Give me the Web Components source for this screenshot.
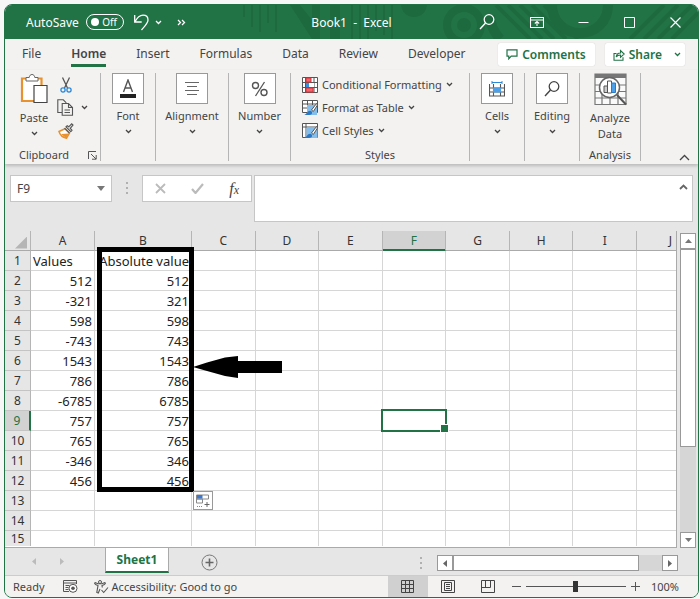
<!DOCTYPE html>
<html lang="en">
<head>
<meta charset="utf-8">
<title>Book1 - Excel</title>
<style>
html,body{margin:0;height:100%}
body{box-sizing:border-box;padding:4px 1px 1px 4px;background:#f7f7f7;color:#444;font-family:"Noto Sans","Open Sans",sans-serif;font-size:12px;--green:#217346;--face:#f3f2f1;--gray:#e6e6e6}
</style>
</head>
<body>
<app-window>
  <title-bar></title-bar>
  <ribbon-tabs></ribbon-tabs>
  <ribbon-body></ribbon-body>
  <formula-bar></formula-bar>
  <sheet-area></sheet-area>
  <sheet-tabs></sheet-tabs>
  <status-bar></status-bar>
</app-window>
<script>
const ICONS = {
  undo: [16,18,'<path d="M1.700 2v7h7M2 8.800C4 5 7 2.200 10 2.200c3 0 5 2 5 4.800 0 3-3 6-6.500 10" fill="none" stroke="currentColor" stroke-width="1.300"/>'],
  chev: [7,5,'<path d="M1 1l2.500 2.500L6 1" fill="none" stroke="currentColor" stroke-width="1.300"/>'],
  up: [11,7,'<path d="M1 6l4.500-4.500L10 6" fill="none" stroke="currentColor" stroke-width="1.300"/>'],
  more: [9,7,'<path d="M1 1l2.500 2.500L1 6M5 1l2.500 2.500L5 6" fill="none" stroke="currentColor" stroke-width="1.300"/>'],
  search: [16,16,'<circle cx="10" cy="5.500" r="4.800" fill="none" stroke="currentColor" stroke-width="1.300"/><path d="M6.500 9L1 15" stroke="currentColor" stroke-width="1.400"/>'],
  ribbonmode: [14,11,'<path d="M.5.5h13v10H.5zM.5 3h13M7 9V4.500M4.800 6.500L7 4.500l2.200 2" fill="none" stroke="currentColor" stroke-width="1.100"/>'],
  min: [11,11,'<path d="M.5 5.500h10" stroke="currentColor"/>'],
  max: [11,11,'<path d="M.5.5h10v10H.5z" fill="none" stroke="currentColor"/>'],
  close: [11,11,'<path d="M.5.5l10 10M10.500.5l-10 10" stroke="currentColor" stroke-width="1.200"/>'],
  comment: [12,11,'<path d="M1 .8h10v6.400H5.200L2.800 9.800V7.200H1z" fill="none" stroke="currentColor" stroke-width="1.200"/>'],
  share: [12,12,'<path d="M3.500 4.500H1v6.700h9V8.300M3.200 8C3.500 5.300 5 4 7.500 4V1.500L11.200 5 7.500 8.300V6C5.500 6 4.200 6.500 3.200 8z" fill="none" stroke="currentColor" stroke-width="1.100"/>'],
  paste: [28,31,'<path d="M2 5.500h19.500V28H2z" fill="#fff" stroke="#e8912d" stroke-width="2.200"/><path d="M6 8V4.500h3.200C9.500 2.500 10.500 1.500 12 1.500s2.500 1 2.800 3H18V8z" fill="#fff" stroke="#666"/><path d="M14 12.500h13v17H14z" fill="#fff" stroke="#444" stroke-width="1.200"/>'],
  cut: [12,16,'<path d="M2.500.5l5 10.500M9.500.5l-5 10.500" stroke="#555" stroke-width="1.300"/><circle cx="3" cy="13" r="2.100" fill="none" stroke="#2b88d8" stroke-width="1.300"/><circle cx="9" cy="13" r="2.100" fill="none" stroke="#2b88d8" stroke-width="1.300"/>'],
  copy: [17,17,'<path d="M5 13.500H.8V.8h5.500l3 3M5.200 4.500h6.300l4 4v7.700H5.200zM11.500 4.500v4h4M7.500 11h5.500M7.500 13.500h5.500" fill="none" stroke="#555" stroke-width="1.100"/>'],
  brush: [16,16,'<path d="M1 8.500l6-2.800 4.500 4.500-3 5C5 14.500 2 12 1 8.500z" fill="#fff" stroke="#e8912d" stroke-width="1.500"/><path d="M3 11l8-.5-3 4.500z" fill="#e8912d"/><path d="M6.500 5.200l5 5M8 3.800l4.800 4.800 1.200-1.300-1.700-2L15 2 13.700.8l-3 3-1.500-1z" fill="#ddd" stroke="#555" stroke-width="1.100"/>'],
  launch: [9,9,'<path d="M.5 8V.5H8M3 3l5 5M8.200 4v4.200H4" fill="none" stroke="#555"/>'],
  font: [18,20,'<path d="M4.500 13L9 1l4.500 12M6 9h6" fill="none" stroke="#555" stroke-width="1.400"/><path d="M1 15h16v4H1z" fill="#222"/>'],
  align: [16,16,'<path d="M1 1.500h14M3 5.500h10M1 9.500h14M3 13.500h10" stroke="#666" stroke-width="1.200"/>'],
  percent: [18,18,'<circle cx="4.500" cy="5.500" r="3" fill="none" stroke="#555" stroke-width="1.400"/><circle cx="13" cy="12.500" r="3" fill="none" stroke="#555" stroke-width="1.400"/><path d="M13.500 2l-9 14" stroke="#555" stroke-width="1.300"/>'],
  cond: [16,16,'<path d="M.5.500h15v15H.5zM3.500.500v15M12 .5v15M.5 5.500h15M.5 10.500h15" fill="#fff" stroke="#555"/><path d="M4 1h5v4H4zM4 11h7v4H4z" fill="#f4646c" stroke="#d13438"/><path d="M4 6h3v4H4z" fill="#3a8fdc"/><path d="M8 6h4v4H8z" fill="#fff"/>'],
  tablefmt: [16,16,'<path d="M.5.500h15v12H.5zM.5 4h15M.5 8h15M5.500.5v14M10.500.5v14" fill="#fff" stroke="#555"/><path d="M5 5h10v10H5z" fill="#83beec"/><path d="M14.500 3.500l-5 6.500 1.800 1.500L15.500 5z" fill="#fff" stroke="#555"/><path d="M2 15c3-.5 3-4.500 6.500-4.200 2.500 1 2 4.200-1.500 4.200z" fill="#2b78c5"/>'],
  cellstyle: [16,16,'<path d="M.5.500h15v14H.5zM.5 4h15M4 .5v14" fill="#fff" stroke="#555"/><path d="M4.500 4.500h11V15h-11z" fill="#83beec"/><path d="M14.500 3.500l-5 6.500 1.800 1.500L15.500 5z" fill="#fff" stroke="#555"/><path d="M2 15c3-.5 3-4.500 6.500-4.200 2.500 1 2 4.200-1.500 4.200z" fill="#2b78c5"/>'],
  cells: [16,16,'<path d="M.5 3v12h15V3M.5 7h15M.5 11h15M4.500 3v12M11.500 3v12" fill="none" stroke="#555" stroke-width="1.100"/><path d="M4 6.500h8v5H4z" fill="#4da0e8"/><path d="M3 1.500h10M3 0v3M13 0v3" stroke="#2b88d8"/>'],
  analyze: [33,33,'<path d="M1 1h31v30.500H1zM1 12h31M1 18.500h31M1 25h31M8 18v13M16 18v13M24 18v13" fill="#fafafa" stroke="#777" stroke-width="1.200"/><path d="M1 1h31v4H1z" fill="#777"/><circle cx="15.500" cy="14.500" r="10" fill="#fff" stroke="#666" stroke-width="1.500"/><path d="M23 22l9 9.500" stroke="#555" stroke-width="2"/><path d="M10 13h4v6.500h-4z" fill="#ccc" stroke="#555"/><path d="M13.500 8h4v12h-4z" fill="#fff" stroke="#555"/><path d="M17.500 10h4v9.500h-4z" fill="#4da0e8" stroke="#2b78c5"/>'],
  down: [8,5,'<path d="M0 0h8L4 5z" fill="#777"/>'],
  x: [11,11,'<path d="M1 1l9 9M10 1l-9 9" stroke="#bbb" stroke-width="1.800"/>'],
  check: [13,11,'<path d="M1 6l3.500 4L12 1" fill="none" stroke="#bbb" stroke-width="2.200"/>'],
  dots: [2,12,'<path d="M0 0h2v2H0zM0 5h2v2H0zM0 10h2v2H0z" fill="#b0b0b0"/>'],
  tup: [7,4,'<path d="M0 4h7L3.500 0z" fill="#777"/>'],
  tdown: [7,4,'<path d="M0 0h7L3.500 4z" fill="#777"/>'],
  tleft: [4,7,'<path d="M4 0v7L0 3.500z" fill="currentColor"/>'],
  tright: [4,7,'<path d="M0 0v7l4-3.500z" fill="currentColor"/>'],
  plusring: [17,17,'<circle cx="8.500" cy="8.500" r="7.500" fill="none" stroke="#777"/><path d="M8.500 4.500v8M4.500 8.500h8" stroke="#666" stroke-width="1.600"/>'],
  macro: [15,13,'<path d="M6 11.500H.5V.5h13V4M.5 3h13M2.500 5.500h4M2.500 7.500h3M2.500 9.500h3" fill="none" stroke="#555"/><circle cx="10" cy="8.300" r="4" fill="#fff" stroke="#555"/><circle cx="10" cy="8.300" r="1.800" fill="#555"/>'],
  access: [15,14,'<circle cx="6" cy="2" r="1.500" fill="none" stroke="#555"/><path d="M1 2.500c-.8 1 0 1.800 1 2.200l2 .8-1.200 7 1.500.5L6 9M11 2.500c.8 1 0 1.800-1 2.200l-2 .8.300 2M1 2.500l3 1.200h4l3-1.200M7.500 10l2.200 2.500L14 7.500" fill="none" stroke="#555" stroke-width="1.100"/>'],
  normal: [13,13,'<path d="M.5.5h12v12H.5zM.5 4.500h12M.5 8.500h12M4.500.5v12M8.500.5v12" fill="none" stroke="#444"/>'],
  page: [14,13,'<path d="M.5.5h13v12H.5zM3.500 2.500h7v8h-7zM5 4.500h4M5 6.500h4M5 8.500h4" fill="none" stroke="#444"/>'],
  breaks: [14,13,'<path d="M.5.5h13v12H.5zM4.500.5v7M9.500.5v7M.500 7.500h9" fill="none" stroke="#444"/>'],
  minus: [9,9,'<path d="M0 4.500h9" stroke="#555"/>'],
  plus: [9,9,'<path d="M0 4.500h9M4.500 0v9" stroke="#555"/>'],
  quick: [14,14,'<path d="M.5 1h12v4H.5zM.5 5h6v4h-6z" fill="#fff" stroke="#888"/><path d="M1 1h5.500v3.500H1z" fill="#3c78d0"/><path d="M1 12.500h5" stroke="#888" stroke-dasharray="1 1"/><path d="M11 8v5M8.500 10.500h5" stroke="#666"/>'],
  arrow: [90,22,'<path d="M0 11L14 6.500 32 1.500 45 0v5h44v12H45v5L32 20 14 15z" fill="#000"/>']
};
const define = (name, html) => customElements.define(name, class extends HTMLElement {
  connectedCallback() {
    if (this.shadowRoot) return;
    const t = document.createElement('template');
    t.innerHTML = `<style>:host,*{box-sizing:border-box}button{font:inherit;color:inherit;background:none;border:0;padding:0;margin:0}</style>` + (typeof html === 'function' ? html(this) : html);
    this.attachShadow({mode: 'open'}).append(t.content.cloneNode(true));
  }
});

define('ui-icon', el => {
  const [w, h, body] = ICONS[el.getAttribute('name')];
  return `<style>:host{display:block;flex:none;line-height:0}</style><svg width="${w}" height="${h}" viewBox="0 0 ${w} ${h}" aria-hidden="true">${body}</svg>`;
});

define('app-window', `<style>
:host{display:flex;flex-direction:column;height:100%;border:1px solid var(--green);border-radius:8px;overflow:hidden;background:var(--gray)}
::slotted(*){flex:none}::slotted(sheet-area){flex:1;min-height:0}
</style><slot></slot>`);

define('title-bar', `<style>
:host{display:grid;grid-template-columns:1fr auto 1fr;align-items:center;height:34px;background:var(--green);color:#fff;position:relative;overflow:hidden}
.art{position:absolute;right:0;top:0;z-index:0}
.left,.right{display:flex;align-items:center;z-index:1;height:100%}
.left{padding-left:21px}
label{display:flex;align-items:center;gap:7px}
.pill{display:flex;align-items:center;justify-content:space-between;width:38px;height:16px;border:1px solid #fff;border-radius:8px;padding:0 6px 0 4px;font-size:10px;line-height:14px}
.pill i{width:8px;height:8px;border-radius:50%;background:#fff}
input{appearance:none;width:0;height:0;margin:0 -7px 0 0}
.left button:nth-of-type(1){margin-left:9px}.left button:nth-of-type(2){margin-left:6px}.left button:nth-of-type(3){margin-left:15px}
h1{margin:0;font-size:12px;font-weight:400;z-index:1;white-space:pre}
.right{justify-content:flex-end}
.right button{width:46px;height:100%;display:grid;place-items:center}.right button:first-child{width:54px}
</style>
<svg class="art" width="470" height="34" viewBox="0 0 470 34" fill="none" stroke="#1d6a3f" stroke-width="4" aria-hidden="true">
<path d="M16 0v12M24 0v22M32 0v27M40 0v18M48 0v27M124 0v34M132 0v34M140 0v34M148 0v26M156 0v30M164 0v34" stroke-width="2"/><path d="M62 0h10l12 15V0h8v34h-8zM102 0h10v34h-10z" fill="#1d6a3f" stroke="none"/><circle cx="186" cy="-1" r="13" fill="#1d6a3f" stroke="none"/><circle cx="236" cy="20" r="17" stroke-width="8"/><circle cx="236" cy="20" r="5" fill="#1d6a3f"/>
<path d="M268 0l34 34M280 0l34 34M292 0l34 34M304 0l34 34M316 0l34 34"/><path d="M262 10c0 8 3 16 10 24M380 0c0 16-12 28-28 28s-28-12-28-28" stroke-width="10"/><path d="M402 34l34-34M416 34l34-34M430 34l34-34M444 34l26-26"/></svg>
<div class="left"><label><span>AutoSave</span><input type="checkbox" role="switch"><span class="pill"><i></i>Off</span></label>
<button aria-label="Undo"><ui-icon name="undo"></ui-icon></button><button aria-label="Undo list"><ui-icon name="chev"></ui-icon></button><button aria-label="More commands"><ui-icon name="more"></ui-icon></button></div>
<h1>Book1  -  Excel</h1>
<div class="right"><button aria-label="Search"><ui-icon name="search"></ui-icon></button><button aria-label="Ribbon display options"><ui-icon name="ribbonmode"></ui-icon></button><button aria-label="Minimize"><ui-icon name="min"></ui-icon></button><button aria-label="Maximize"><ui-icon name="max"></ui-icon></button><button aria-label="Close"><ui-icon name="close"></ui-icon></button></div>`);

define('ribbon-tabs', `<style>
:host{display:flex;align-items:flex-start;justify-content:space-between;height:31px;background:var(--face);padding:0 13px 0 17px}
nav{display:flex;gap:30px}
nav button{height:28px;padding-top:4px;border-bottom:3px solid transparent;line-height:16px}
nav .on{font-weight:600;border-color:var(--green)}
.act{display:flex;gap:10px;padding-top:4px}
.act button{display:flex;align-items:center;gap:4px;height:23px;background:#fff;border-radius:2px;color:var(--green);font-weight:600;padding:0 9px 0 8px;box-shadow:0 0 1px #bbb}
.act button:last-child ui-icon:last-child{margin-left:8px}.act button:last-child{padding-right:4px}
</style><nav><button>File</button><button class="on">Home</button><button>Insert</button><button>Formulas</button><button>Data</button><button>Review</button><button>Developer</button></nav>
<div class="act"><button><ui-icon name="comment"></ui-icon>Comments</button><button><ui-icon name="share"></ui-icon>Share<ui-icon name="chev"></ui-icon></button></div>`);

define('ribbon-group', el => `<style>
:host{display:flex;flex-direction:column;border-right:1px solid #b5b5b5;height:88px}
.c{flex:1;display:flex}
footer{display:flex;justify-content:center;align-items:center;font-size:11px;line-height:12px;height:12px;position:relative}
:host([launcher]) footer{padding-right:17px}
footer button{position:absolute;right:3px}
</style><div class="c"><slot></slot></div><footer>${el.getAttribute('label') || ''}${el.hasAttribute('launcher') ? '<button aria-label="Clipboard settings"><ui-icon name="launch"></ui-icon></button>' : ''}</footer>`);

define('ribbon-tile', el => `<style>
:host{display:flex;flex:1;justify-content:center;text-align:center;font-size:11px}
button{display:flex;flex-direction:column;align-items:center}
.box{width:32px;height:31px;border:1px solid #999;background:#fff;display:grid;place-items:center}
.l{line-height:16px;margin:4px 0 5px}
.plain .l{margin-top:6px}.plain .box{border:0;background:none}
</style><button class="${el.hasAttribute('plain') ? 'plain' : ''}"><span class="box"><ui-icon name="${el.getAttribute('icon')}"></ui-icon></span><span class="l">${el.getAttribute('label')}</span>${el.hasAttribute('nomenu') ? '' : '<ui-icon name="chev"></ui-icon>'}</button>`);

define('ribbon-body', `<style>
:host{display:flex;justify-content:space-between;background:var(--face);padding:3px 8px 3px 0;height:94px;position:relative;box-shadow:0 2px 3px #bbb;z-index:1}
.g{display:flex}
.clip{width:96px}.font{width:55px}.al{width:73px}.num{width:62px}.sty{width:179px}.ce,.ed{width:55px}.an{width:61px}
.paste{margin:0 0 0 12px;flex:none;width:34px}
.small{display:grid;grid-template-columns:17px 7px;column-gap:7px;align-content:start;justify-items:center;align-items:center;grid-auto-rows:23px;margin:0 0 0 6px}
.small button{display:block}
.lines{display:flex;flex-direction:column;padding:0 0 0 11px;font-size:11px}
.lines button{display:flex;align-items:center;gap:4px;height:23px;white-space:nowrap}
.col{align-self:flex-end}
</style><div class="g">
<ribbon-group class="clip" label="Clipboard" launcher><ribbon-tile class="paste" plain icon="paste" label="Paste"></ribbon-tile><div class="small"><button aria-label="Cut"><ui-icon name="cut"></ui-icon></button><span></span><button aria-label="Copy"><ui-icon name="copy"></ui-icon></button><button aria-label="Copy options"><ui-icon name="chev"></ui-icon></button><button aria-label="Format Painter"><ui-icon name="brush"></ui-icon></button></div></ribbon-group>
<ribbon-group class="font"><ribbon-tile icon="font" label="Font"></ribbon-tile></ribbon-group>
<ribbon-group class="al"><ribbon-tile icon="align" label="Alignment"></ribbon-tile></ribbon-group>
<ribbon-group class="num"><ribbon-tile icon="percent" label="Number"></ribbon-tile></ribbon-group>
<ribbon-group class="sty" label="Styles"><div class="lines"><button><ui-icon name="cond"></ui-icon>Conditional Formatting<ui-icon name="chev"></ui-icon></button><button><ui-icon name="tablefmt"></ui-icon>Format as Table<ui-icon name="chev"></ui-icon></button><button><ui-icon name="cellstyle"></ui-icon>Cell Styles<ui-icon name="chev"></ui-icon></button></div></ribbon-group>
<ribbon-group class="ce"><ribbon-tile icon="cells" label="Cells"></ribbon-tile></ribbon-group>
<ribbon-group class="ed"><ribbon-tile icon="search" label="Editing"></ribbon-tile></ribbon-group>
<ribbon-group class="an" label="Analysis"><ribbon-tile plain nomenu icon="analyze" label="Analyze&lt;br&gt;Data"></ribbon-tile></ribbon-group></div>
<button class="col" aria-label="Collapse ribbon"><ui-icon name="up"></ui-icon></button>`);

define('formula-bar', `<style>
:host{display:flex;align-items:flex-start;padding:11px 5px 0;height:67px}
.name,.fx{display:flex;align-items:center;height:27px;background:#fff;border:1px solid #c6c6c6}
.name{width:102px;padding:0 6px}
input{border:0;outline:0;padding:0;flex:1;min-width:0;font:inherit;color:inherit}
.d{margin:7px 14px}
.fx{width:110px;justify-content:space-between;padding:0 12px}
.f{font:italic 400 16px "Liberation Serif",serif}.f small{font-size:12px}
.in{flex:1;display:flex;align-items:flex-start;height:47px;background:#fff;border:1px solid #c6c6c6;margin-left:2px;padding:8px 4px 0 0}
textarea{flex:1;border:0;outline:0;resize:none;height:30px;padding:0 6px;font:inherit}
svg{display:block}
</style><div class="name"><input aria-label="Name box" value="F9"><button aria-label="Names"><ui-icon name="down"></ui-icon></button></div><ui-icon class="d" name="dots"></ui-icon>
<div class="fx"><button aria-label="Cancel"><ui-icon name="x"></ui-icon></button><button aria-label="Enter"><ui-icon name="check"></ui-icon></button><button class="f" aria-label="Insert function">f<small>x</small></button></div>
<div class="in"><textarea aria-label="Formula"></textarea><button aria-label="Collapse formula bar"><svg width="9" height="6"><path d="M1 5l3.500-3.500L8 5" fill="none" stroke="#666" stroke-width="1.800"/></svg></button></div>`);

const values = [512,-321,598,-743,1543,786,-6785,757,765,-346,456];
define('sheet-grid', () => {
  const cols = 'ABCDEFGHIJ'.split('');
  let rows = '';
  for (let r = 1; r <= 15; r++) {
    rows += `<tr><th scope="row" class="${r === 9 ? 'on' : ''}">${r}</th>`;
    cols.forEach((c, i) => {
      let v = '', k = '';
      if (r === 1 && i < 2) { v = ['Values', 'Absolute value'][i]; k = i ? 'n' : ''; }
      else if (r > 1 && r <= 12 && i < 2) { v = i ? Math.abs(values[r - 2]) : values[r - 2]; k = 'n'; }
      if (r === 9 && c === 'F') k = 'sel';
      rows += `<td class="${k}">${v}</td>`;
    });
    rows += '</tr>';
  }
  return `<style>
:host{display:block;position:relative;overflow:hidden;border-right:1px solid #aaa;border-bottom:1px solid #aaa;background:#fff}
table{table-layout:fixed;width:100%;border-collapse:separate;border-spacing:0;color:#222}
th{font-weight:400;font-size:12px;color:#333;background:var(--gray);padding:0;border-right:1px solid #b5b5b5}
thead th{height:20px;line-height:18px;border-bottom:1px solid #aaa}
thead th:last-child{border-right:0;text-align:right;padding-right:4px}
tbody th{border-bottom:1px solid #c4c4c4}
td{height:20px;line-height:18px;font-size:13px;padding:1px 2px 0;border-right:1px solid #d6d6d6;border-bottom:1px solid #d6d6d6;white-space:nowrap}
td:last-child{border-right:0}
tbody tr:last-child>*{border-bottom:0;height:15px;line-height:15px;padding:0}
.n{text-align:right}
th.on{background:#d2d2d2;color:var(--green)}thead .on{box-shadow:inset 0 -1px var(--green);border-bottom-color:var(--green)}tbody .on{border-right:2px solid var(--green)}
.sel{position:relative}
.sel::before{content:"";position:absolute;inset:-2px;border:2px solid var(--green)}
.sel::after{content:"";position:absolute;right:-4px;bottom:-3px;width:7px;height:7px;background:var(--green);border:1px solid #fff}
.corner{display:block;margin:5px 3px 1px auto;width:12px;height:12px;background:#b5b5b5;clip-path:polygon(100% 0,100% 100%,0 100%)}
.mark{position:absolute;left:92px;top:16px;width:97px;height:245px;border:5px solid #000}
.arrow{position:absolute;left:188px;top:125px}
.quick{position:absolute;left:188px;top:260px;width:20px;height:19px;background:#fff;border:1px solid #999;display:grid;place-items:center}
</style><table><colgroup><col style="width:26px"><col style="width:64px"><col style="width:97px"><col span="7"><col style="width:39px"></colgroup><thead><tr><th aria-label="Select all"><i class="corner"></i></th>${cols.map(c => `<th scope="col" class="${c === 'F' ? 'on' : ''}">${c}</th>`).join('')}</tr></thead><tbody>${rows}</tbody></table>
<div class="mark"></div><ui-icon class="arrow" name="arrow"></ui-icon><button class="quick" aria-label="Quick analysis"><ui-icon name="quick"></ui-icon></button>`;
});

define('scroll-bar', el => { const v = el.hasAttribute('vertical'); return `<style>
:host{display:flex;flex-direction:${v ? 'column' : 'row'};background:#d6d6d6;color:#666}
button{flex:none;width:16px;height:16px;background:#fff;border:1px solid #999;display:grid;place-items:center}
.t{flex:1;display:flex;flex-direction:inherit}
.t div{flex:0 0 ${v ? '70%' : '89%'};background:#fff;border:1px solid #999}
</style><button aria-label="Scroll back"><ui-icon name="${v ? 'tup' : 'tleft'}"></ui-icon></button><div class="t"><div></div></div><button aria-label="Scroll forward"><ui-icon name="${v ? 'tdown' : 'tright'}"></ui-icon></button>`; });

define('sheet-area', `<style>
:host{display:grid;grid-template-columns:1fr 16px;grid-template-rows:minmax(0,1fr);column-gap:3px;padding-right:2px}
sheet-grid{min-height:0}scroll-bar{margin-top:2px}
</style><sheet-grid></sheet-grid><scroll-bar vertical></scroll-bar>`);

define('sheet-tabs', `<style>
:host{display:flex;align-items:flex-start;height:27px;padding-right:20px;color:#bbb}
.nav{display:flex;gap:24px;padding:10px 0 0 27px;width:100px}
.tab{width:64px;height:25px;background:#fff;border-bottom:2px solid var(--green);border-left:1px solid #aaa;border-right:1px solid #aaa;color:var(--green);font-weight:700;font-size:12px}
.add{margin:6px 0 0 32px}.d{margin:9px 15px 0 auto}
scroll-bar{width:241px;margin-top:7px}
</style><div class="nav"><button aria-label="Previous sheet"><ui-icon name="tleft"></ui-icon></button><button aria-label="Next sheet"><ui-icon name="tright"></ui-icon></button></div><button class="tab">Sheet1</button><button class="add" aria-label="New sheet"><ui-icon name="plusring"></ui-icon></button><ui-icon class="d" name="dots"></ui-icon><scroll-bar></scroll-bar>`);

define('status-bar', `<style>
:host{display:flex;align-items:center;justify-content:space-between;height:22px;background:var(--face);border-top:1px solid #ccc;font-size:11px;padding:0 19px 0 8px}
div{display:flex;align-items:center;height:100%}
.l ui-icon{margin-right:3px}.l button{margin:0 16px 0 18px}.l button ui-icon{margin:0}
.v{width:40px;height:100%;display:grid;place-items:center}.v.on{background:#d0d0d0}
.z{margin-left:4px}
input{appearance:none;width:100px;height:12px;margin:0 5px;background:linear-gradient(#555,#555) center/100% 1px no-repeat}
input::-webkit-slider-thumb{appearance:none;width:5px;height:11px;background:#333}
output{margin-left:11px}
</style><div class="l"><span>Ready</span><button aria-label="Record macro"><ui-icon name="macro"></ui-icon></button><ui-icon name="access"></ui-icon><span>Accessibility: Good to go</span></div>
<div><button class="v on" aria-label="Normal"><ui-icon name="normal"></ui-icon></button><button class="v" aria-label="Page layout"><ui-icon name="page"></ui-icon></button><button class="v" aria-label="Page breaks"><ui-icon name="breaks"></ui-icon></button><button class="z" aria-label="Zoom out"><ui-icon name="minus"></ui-icon></button><input type="range" aria-label="Zoom" min="0" max="200" value="100"><button aria-label="Zoom in"><ui-icon name="plus"></ui-icon></button><output>100%</output></div>`);
</script>
</body>
</html>
